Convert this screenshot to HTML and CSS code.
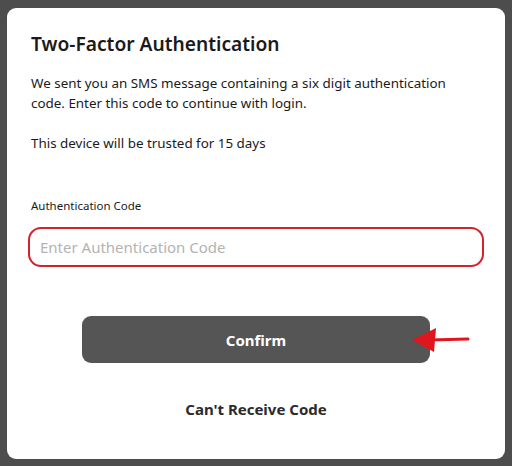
FILE: index.html
```html
<!DOCTYPE html>
<html lang="en">
<head>
    <meta charset="UTF-8">
    <title>Two-Factor Authentication</title>
    <link rel="stylesheet" href="styles.css">
</head>
<body>

    <!-- 2FA modal -->
    <div class="modal">
        <h1>Two-Factor Authentication</h1>
        <p class="intro">We sent you an SMS message containing a six digit authentication code. Enter this code to continue with login.</p>
        <p class="trusted">This device will be trusted for 15 days</p>

        <label class="field-label" for="code-input">Authentication Code</label>
        <input type="text" id="code-input" class="code-input" placeholder="Enter Authentication Code">

        <div class="confirm-row">
            <button class="confirm-button">Confirm</button>
            <!-- annotation arrow -->
            <svg class="pointer" width="60" height="26" viewBox="0 0 60 26">
                <line x1="56" y1="12" x2="18" y2="13" stroke="#e0161f" stroke-width="3" stroke-linecap="round"/>
                <polygon points="0,13 24,1 22,25" fill="#e0161f"/>
            </svg>
        </div>

        <button class="link-button">Can't Receive Code</button>
    </div>

</body>
</html>
```

FILE: styles.css
```css
/* Reset */
* {
    box-sizing: border-box;
    margin: 0;
    padding: 0;
}

html, body {
    height: 100%;
    overflow: hidden;
}

body {
    font-family: 'Noto Sans', Arial, sans-serif;
    background-color: #4d4d4d;
    color: #1a1a1a;
    padding: 8px 7px 7px 7px;
}

/* Modal card */
.modal {
    background-color: #FFFFFF;
    border-radius: 9px;
    height: 451px;
    padding: 23px 24px 0 24px;
    display: flex;
    flex-direction: column;
}

.modal h1 {
    font-size: 19.2px;
    font-weight: 600;
    line-height: 26px;
    margin-bottom: 16px;
}

.intro,
.trusted {
    font-size: 13.4px;
    line-height: 20px;
}

.intro {
    width: 430px;
    margin-bottom: 20px;
}

.trusted {
    margin-bottom: 45px;
}

.field-label {
    font-size: 11.5px;
    line-height: 16px;
    margin-bottom: 13px;
}

.code-input {
    width: 456px;
    margin-left: -3px;
    height: 40px;
    border: 2px solid #d2232c;
    border-radius: 13px;
    padding: 0 10px;
    font-family: inherit;
    font-size: 15px;
    color: #333;
    outline: none;
}

.code-input::placeholder {
    color: #b3b3b3;
}

/* Confirm row */
.confirm-row {
    display: flex;
    align-items: center;
    margin-top: 49px;
    margin-left: 51px;
}

.confirm-button {
    width: 348px;
    height: 47px;
    background-color: #555555;
    color: #FFFFFF;
    border: none;
    border-radius: 9px;
    font-family: inherit;
    font-size: 15px;
    font-weight: 700;
    cursor: pointer;
}

.pointer {
    margin-left: -18px;
}

.link-button {
    align-self: center;
    margin-top: 36px;
    background: none;
    border: none;
    font-family: inherit;
    font-size: 15px;
    font-weight: 700;
    color: #2b2b2b;
    cursor: pointer;
}
```
